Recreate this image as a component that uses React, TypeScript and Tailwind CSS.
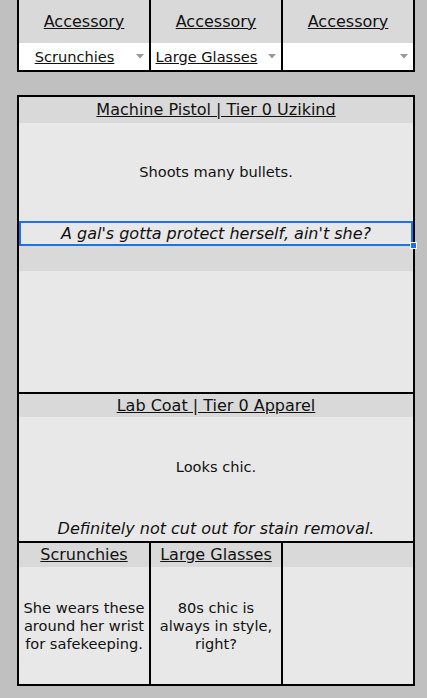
import React from "react";

const accessorySlots = ["Scrunchies", "Large Glasses", ""];

const equippedAccessories = [
  {
    name: "Scrunchies",
    description: "She wears these around her wrist for safekeeping.",
  },
  {
    name: "Large Glasses",
    description: "80s chic is always in style, right?",
  },
  { name: "", description: "" },
];

function DropArrow() {
  return (
    <svg width="8" height="5" viewBox="0 0 8 5" className="shrink-0">
      <path d="M0 0 L8 0 L4 4.5 Z" fill="#9a9a9a" />
    </svg>
  );
}

function AccessoryPicker() {
  return (
    <div className="ml-[17px] grid w-[398px] grid-cols-[130px_132px_132px] border-x-2 border-b-2 border-black">
      {accessorySlots.map((value, index) => (
        <div
          key={index}
          className={index > 0 ? "border-l-2 border-black" : ""}
        >
          <div className="flex h-[43px] items-center justify-center bg-[#d9d9d9] pt-[1px] text-[16px] underline">
            Accessory
          </div>
          <div className="flex h-[27px] items-center bg-white">
            <span className="flex-1 text-center underline">{value}</span>
            <span className="flex w-[19px] justify-center">
              <DropArrow />
            </span>
          </div>
        </div>
      ))}
    </div>
  );
}

function WeaponSection() {
  return (
    <div className="flex flex-col">
      <div className="flex h-[26px] items-center justify-center bg-[#d9d9d9] text-[16px] underline">
        Machine Pistol | Tier 0 Uzikind
      </div>
      <div className="flex h-[98px] items-center justify-center bg-[#e8e8e8]">
        Shoots many bullets.
      </div>
      <div className="relative flex h-[25px] items-center justify-center border-2 border-[#1a73e8] bg-[#e8e8e8] text-[16px] italic">
        A gal's gotta protect herself, ain't she?
        <span className="absolute -right-[6px] -bottom-[5px] h-[7px] w-[7px] border border-white bg-[#1a73e8]" />
      </div>
      <div className="h-[25px] bg-[#d9d9d9]" />
      <div className="h-[121px] bg-[#e8e8e8]" />
    </div>
  );
}

function ApparelSection() {
  return (
    <div className="flex flex-col border-t-2 border-black">
      <div className="flex h-[23px] items-center justify-center bg-[#d9d9d9] text-[16px] underline">
        Lab Coat | Tier 0 Apparel
      </div>
      <div className="flex h-[100px] items-center justify-center bg-[#e8e8e8]">
        Looks chic.
      </div>
      <div className="flex h-[24px] items-center justify-center bg-[#e8e8e8] text-[16px] italic">
        Definitely not cut out for stain removal.
      </div>
    </div>
  );
}

function AccessorySection() {
  return (
    <div className="grid grid-cols-[130px_132px_132px] border-t-2 border-black">
      {equippedAccessories.map((item, index) => (
        <div
          key={index}
          className={index > 0 ? "flex flex-col border-l-2 border-black" : "flex flex-col"}
        >
          <div className="flex h-[24px] items-center justify-center bg-[#d9d9d9] text-[16px] underline">
            {item.name}
          </div>
          <div className="flex h-[117px] items-center justify-center bg-[#e8e8e8] px-[3px] text-center leading-[18px]">
            {item.description}
          </div>
        </div>
      ))}
    </div>
  );
}

export default function App() {
  return (
    <div
      className="h-[698px] w-[427px] overflow-hidden bg-[#c0c0c0] text-[14.6px] text-[#111]"
      style={{ fontFamily: '"DejaVu Sans", Verdana, sans-serif' }}
    >
      <AccessoryPicker />
      <div className="mt-[23px] ml-[17px] flex w-[398px] flex-col border-2 border-black">
        <WeaponSection />
        <ApparelSection />
        <AccessorySection />
      </div>
    </div>
  );
}
